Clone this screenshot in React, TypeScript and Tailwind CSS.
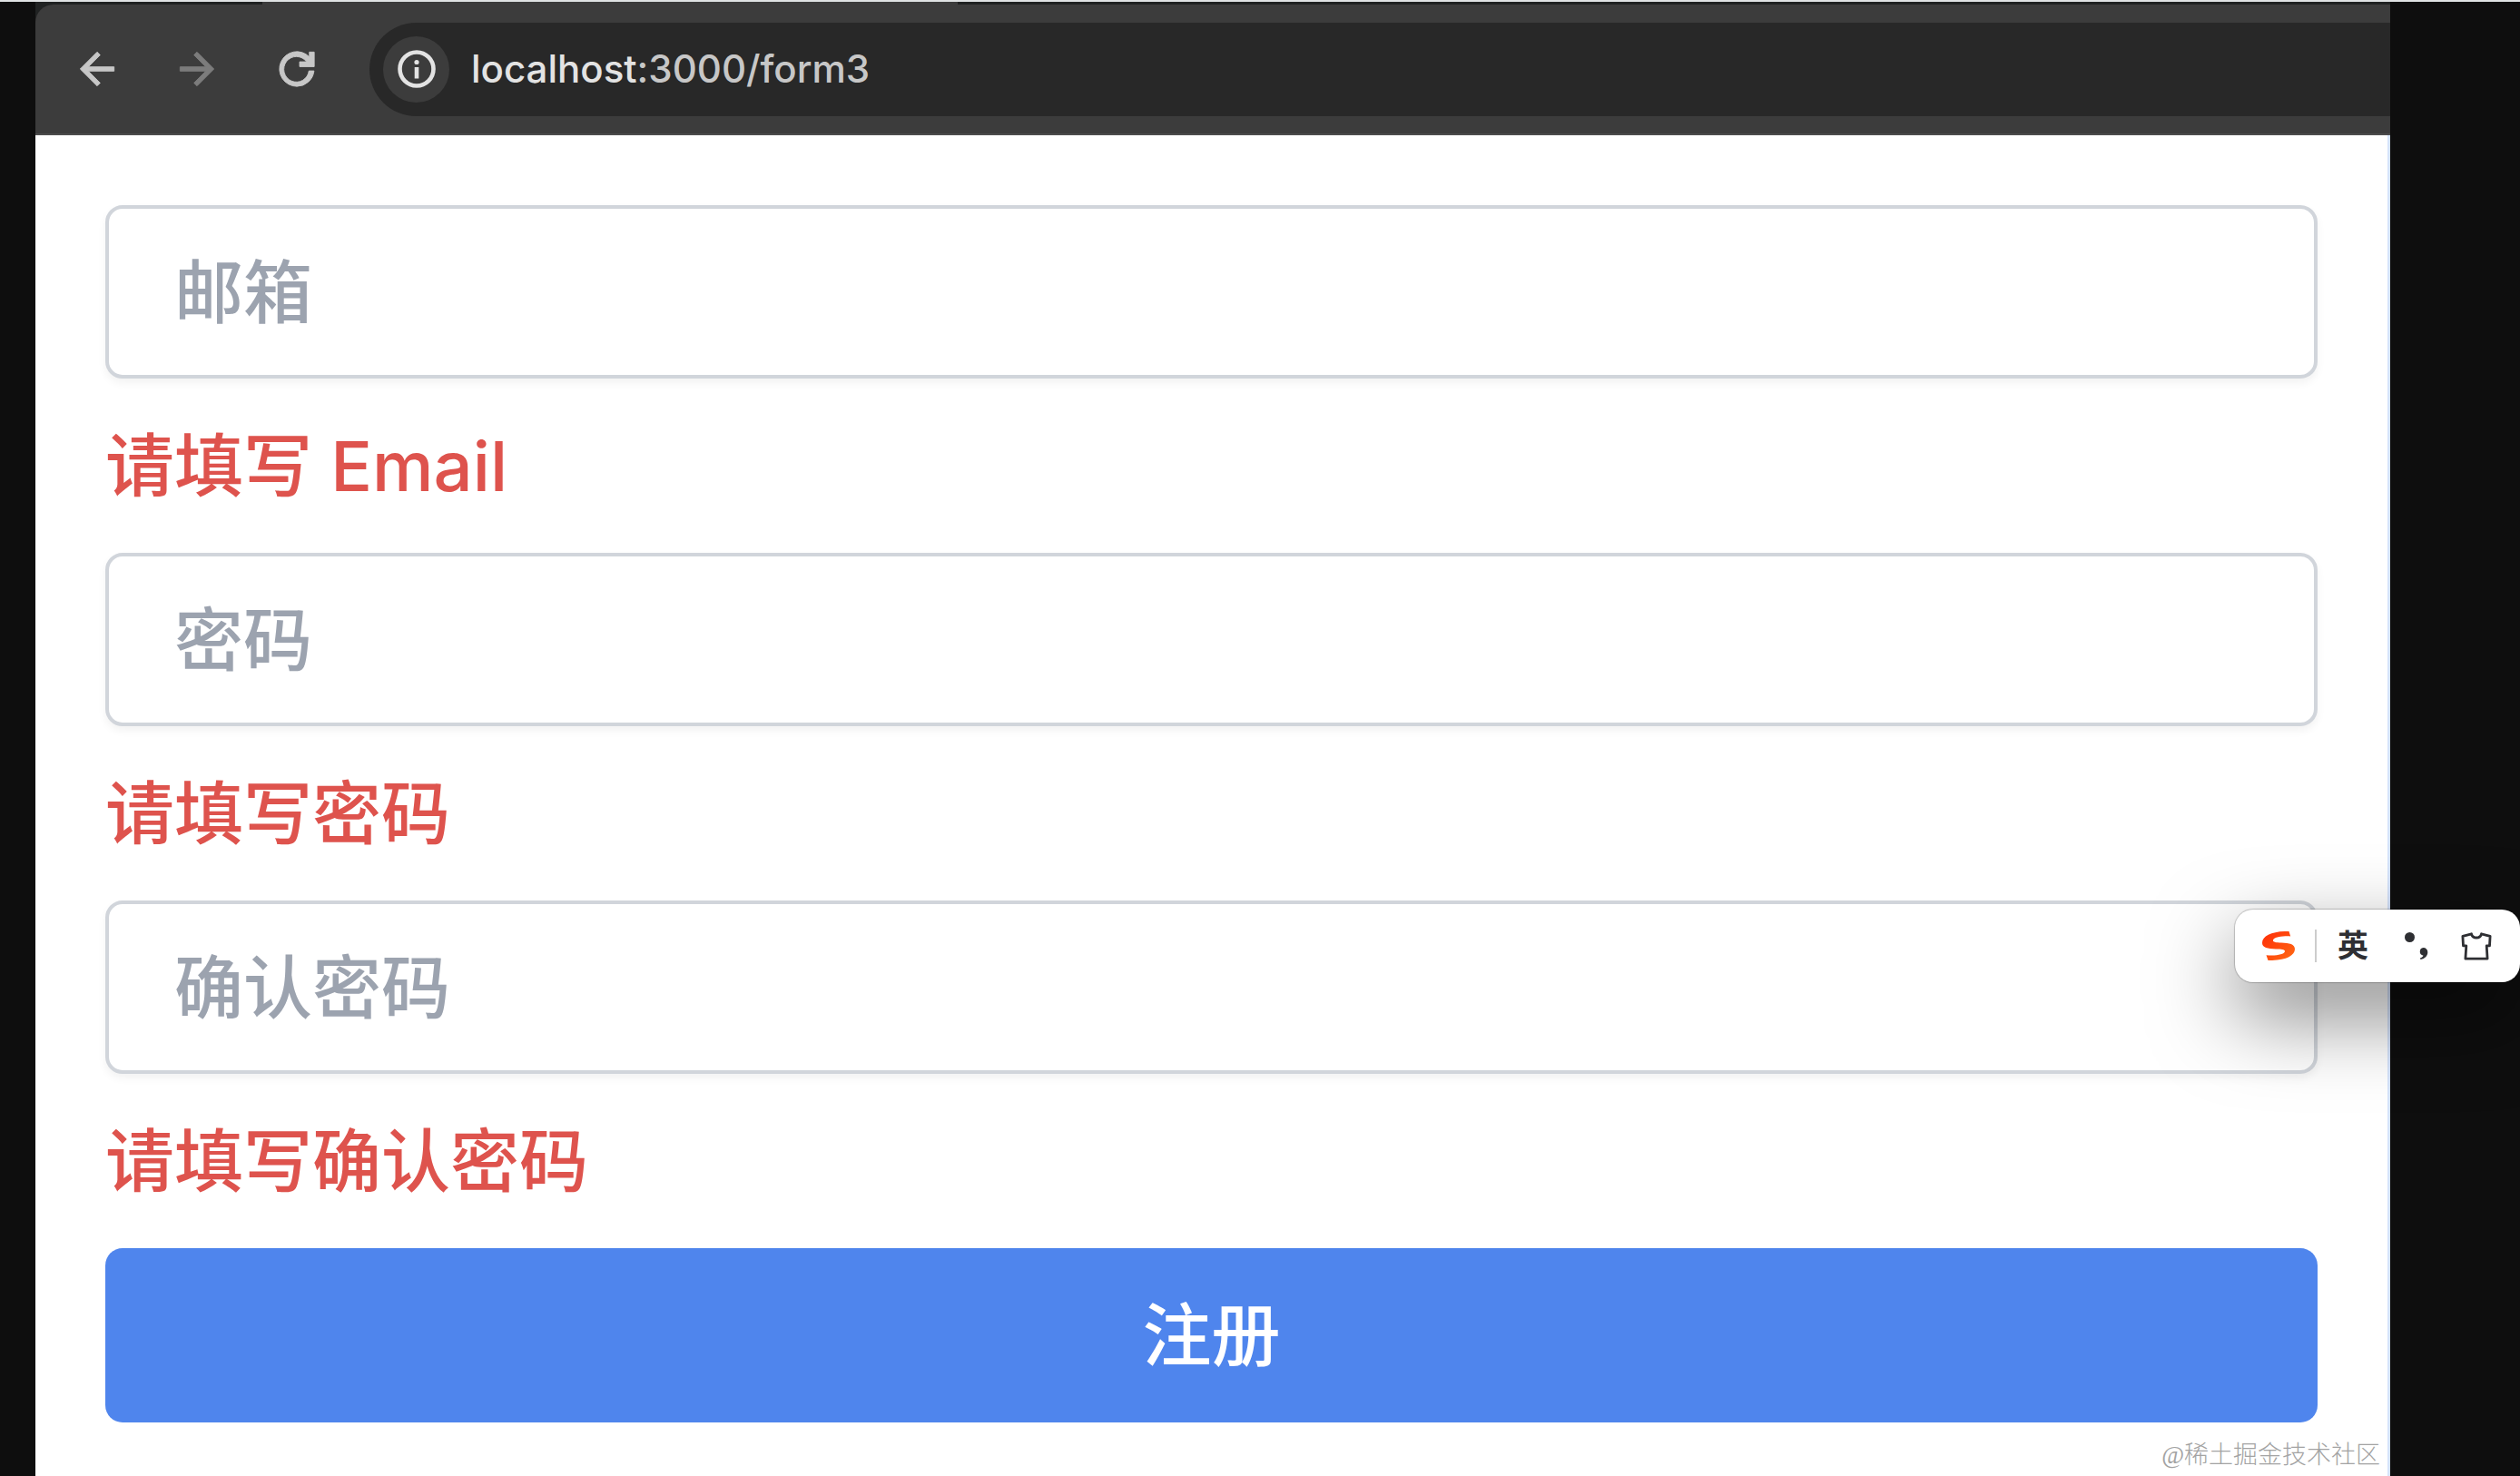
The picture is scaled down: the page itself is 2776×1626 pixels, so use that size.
import { type ReactNode, useState } from "react";

type Field = { id: string; label: string; type: string; error: string };

const FIELDS: Field[] = [
  { id: "email", label: "邮箱", type: "email", error: "请填写 Email" },
  { id: "password", label: "密码", type: "password", error: "请填写密码" },
  { id: "confirm", label: "确认密码", type: "password", error: "请填写确认密码" },
];

function NavButton({ label, dim, children }: { label: string; dim?: boolean; children: ReactNode }) {
  return (
    <button
      type="button"
      aria-label={label}
      className={dim ? "flex size-14 items-center justify-center text-[#7c7c7c]" : "flex size-14 items-center justify-center text-[#c7c7c7]"}
    >
      <svg viewBox="0 0 24 24" className="size-14" fill="currentColor" stroke="currentColor" strokeWidth="0.4" aria-hidden="true">
        {children}
      </svg>
    </button>
  );
}

function TabStrip() {
  return (
    <div className="flex h-[3px] shrink-0 bg-[#202222]">
      <div className="ml-[250px] h-[3px] w-[766px] bg-[#3c3c3c]" />
    </div>
  );
}

function Toolbar() {
  return (
    <div className="shrink-0 bg-[#202222]">
      <div className="flex h-36 items-center rounded-tl-[20px] border-b-2 border-[#4c4c4c] bg-[#3c3c3c] pl-10">
        <nav className="flex gap-[54px]">
          <NavButton label="Back">
            <path d="M20 11H7.83l5.59-5.59L12 4l-8 8 8 8 1.41-1.41L7.83 13H20v-2z" />
          </NavButton>
          <NavButton label="Forward" dim>
            <path d="M4 11h12.17l-5.59-5.59L12 4l8 8-8 8-1.41-1.41L16.17 13H4v-2z" />
          </NavButton>
          <NavButton label="Reload">
            <path d="M12 20.2a8.2 8.2 0 1 1 5.9-13.9V4h2.3v6.9h-6.9V8.6h3.3A5.95 6 0 1 0 17.7 12.9h2.4A8.15 8.2 0 0 1 12 20.2z" />
          </NavButton>
        </nav>
        <div className="ml-[52px] flex h-[103px] flex-1 items-center rounded-l-full bg-[#282828] pl-[15px]">
          <button
            type="button"
            aria-label="Site information"
            className="flex size-[73px] shrink-0 items-center justify-center rounded-full bg-[#3c3c3c] text-[#e3e3e3]"
          >
            <svg viewBox="0 0 42 42" className="size-[42px]" fill="none" aria-hidden="true">
              <circle cx="21" cy="21" r="18.5" stroke="currentColor" strokeWidth="4.6" />
              <circle cx="21" cy="13.5" r="2.6" fill="currentColor" />
              <path d="M21 19v12.5" stroke="currentColor" strokeWidth="4.6" />
            </svg>
          </button>
          <p className="ml-6 font-['Inter','Liberation_Sans',sans-serif] text-[42px] leading-none font-medium text-[#c7c7c7]">
            <span className="text-[#e3e3e3]">localhost</span>:3000/form3
          </p>
        </div>
      </div>
    </div>
  );
}

function FormRow({ field }: { field: Field }) {
  const [value, setValue] = useState("");
  return (
    <div>
      <input
        id={field.id}
        type={field.type}
        aria-label={field.label}
        aria-describedby={field.id + "-error"}
        placeholder={field.label}
        value={value}
        onChange={(e) => setValue(e.target.value)}
        className="block h-[191px] w-full rounded-[19px] border-4 border-[#d1d5db] bg-white px-[72px] text-[76px] font-medium shadow-[0_5px_10px_rgba(0,0,0,0.05)] outline-none placeholder:text-[#9ca3af] placeholder:opacity-100"
      />
      <p id={field.id + "-error"} className="text-[76px] leading-[192px] font-medium text-[#de534d]">
        {field.error}
      </p>
    </div>
  );
}

function InputMethodBar() {
  return (
    <div className="absolute top-[1000px] right-0 flex h-20 w-[314px] items-center rounded-[20px] bg-white pl-[30px] text-[#2e2f33] shadow-[0_0_1px_1px_rgba(0,0,0,0.2),0_36px_90px_rgba(0,0,0,0.5)]">
      <svg viewBox="0 0 36 32" className="h-8 w-9" aria-hidden="true">
        <defs>
          <linearGradient id="brand" x1="0" y1="0" x2="1" y2="1">
            <stop offset="0" stopColor="#ff2d08" />
            <stop offset="1" stopColor="#ff6a13" />
          </linearGradient>
        </defs>
        <path
          fill="url(#brand)"
          d="M29.5 0L31.2 5.4C24 5 13 6 12 9.600C11.500 12 15 12.300 21 12.500C30 12.800 36 14 36 19.500C36 27 25 32.500 6.500 32L4.500 26.200C14 27.500 24.500 25.500 25 22C25.200 20 21 19.800 15 19.600C6 19.200 0 18 0 12.800C0 4.500 12 -.5 29.500 0z"
        />
      </svg>
      <div className="ml-[22px] h-9 w-[2px] bg-[#cccccc]" />
      <button type="button" className="ml-[23px] text-[34px] leading-none font-bold">英</button>
      <button type="button" aria-label="Punctuation" className="ml-10">
        <svg viewBox="0 0 26 30" className="h-[30px] w-[26px]" fill="currentColor" aria-hidden="true">
          <circle cx="5.500" cy="5.500" r="5.500" />
          <path d="M20.500 17a4.800 4.800 0 0 1 4.800 5c0 4-3 7-7.800 8l-.6-1.600c2-.7 3.200-1.600 3.600-2.700a4.400 4.400 0 0 1 0-8.700z" />
        </svg>
      </button>
      <button type="button" aria-label="Skin" className="ml-9">
        <svg viewBox="0 0 34 31" className="h-[31px] w-[34px]" fill="none" stroke="currentColor" strokeWidth="2.800" strokeLinejoin="round" aria-hidden="true">
          <path d="M11.500 1.800c1.500 5.600 9.500 5.600 11 0l9.600 2.600-.6 10.500h-3.300l.9 14.300H4.900l.9-14.300H2.500L1.900 4.400z" />
        </svg>
      </button>
    </div>
  );
}

export default function App() {
  return (
    <div className="relative flex min-h-screen flex-col overflow-hidden border-t-2 border-[#e0e3e4] bg-[#0e0e0e] font-['Inter','Noto_Sans_CJK_SC',sans-serif]">
      <div className="mr-[143px] ml-[39px] flex flex-1 flex-col">
        <TabStrip />
        <Toolbar />
        <main className="relative flex-1 border-r-[3px] border-[#d5e3fb] bg-white px-[77px] pt-[77px] pb-10">
          <form noValidate onSubmit={(e) => e.preventDefault()}>
            {FIELDS.map((field) => (
              <FormRow key={field.id} field={field} />
            ))}
            <button type="submit" className="block h-48 w-full rounded-[19px] bg-[#4f85ed] text-[76px] font-medium text-white">
              注册
            </button>
          </form>
          <p className="absolute right-2 bottom-2 font-['Liberation_Serif','Noto_Sans_CJK_SC',serif] text-[27px] leading-[30px] font-light text-[#a3a3a3]">
            @稀土掘金技术社区
          </p>
        </main>
      </div>
      <InputMethodBar />
    </div>
  );
}
